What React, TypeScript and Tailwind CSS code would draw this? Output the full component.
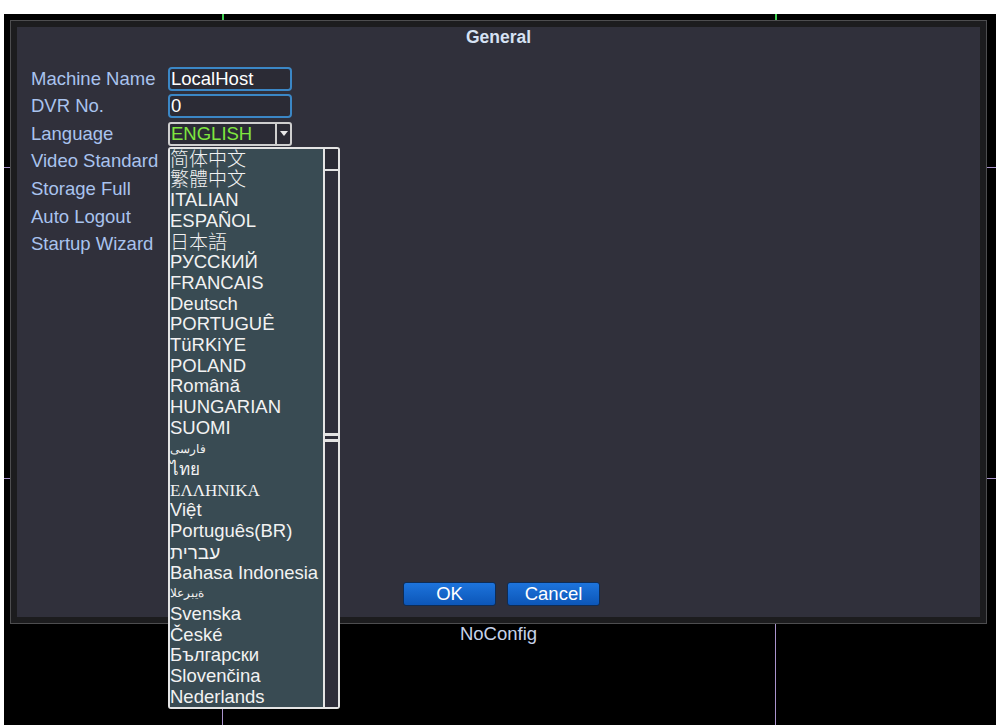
import React from 'react';

const FONT = '"Liberation Sans", Arial, "Noto Sans CJK SC", sans-serif';

const LABELS = ['Machine Name', 'DVR No.', 'Language', 'Video Standard', 'Storage Full', 'Auto Logout', 'Startup Wizard'];

type Lang = { text: string; cls?: string };

const LANGS: Lang[] = [
  { text: '简体中文', cls: 'font-light text-[19px]' },
  { text: '繁體中文', cls: 'font-light text-[19px]' },
  { text: 'ITALIAN' },
  { text: 'ESPAÑOL' },
  { text: '日本語', cls: 'font-light text-[19px]' },
  { text: 'РУССКИЙ' },
  { text: 'FRANCAIS' },
  { text: 'Deutsch' },
  { text: 'PORTUGUÊ' },
  { text: 'TüRKiYE' },
  { text: 'POLAND' },
  { text: 'Română' },
  { text: 'HUNGARIAN' },
  { text: 'SUOMI' },
  { text: 'فارسی', cls: 'text-[12px]' },
  { text: 'ไทย', cls: 'text-[17px] [font-family:"Liberation_Serif",serif]' },
  { text: 'ΕΛΛΗΝΙΚΑ', cls: 'text-[17px] [font-family:"Liberation_Serif",serif]' },
  { text: 'Việt' },
  { text: 'Português(BR)' },
  { text: 'עברית', cls: 'text-[19px]' },
  { text: 'Bahasa Indonesia' },
  { text: 'العربية', cls: 'text-[12px] [unicode-bidi:bidi-override] [direction:ltr]' },
  { text: 'Svenska' },
  { text: 'České' },
  { text: 'Български' },
  { text: 'Slovenčina' },
  { text: 'Nederlands' },
];

function LanguageList() {
  return (
    <div className="absolute left-[-2px] top-[23px] z-20 flex h-[562px] w-[172px] rounded-[3px] border-2 border-[#e4e4e4]">
      <ul className="flex flex-1 flex-col bg-[#394b53]">
        {LANGS.map(l => (
          <li key={l.text} className="flex h-[20.7px] items-center whitespace-nowrap leading-none text-[#f2f2f2]">
            <span className={l.cls ?? 'text-[18.5px]'}>{l.text}</span>
          </li>
        ))}
      </ul>
      <div className="flex w-[15px] flex-col border-l-2 border-[#e4e4e4] bg-[#2e2e3a]">
        <div className="h-[22px] border-b-2 border-[#e4e4e4] bg-[#2a2a34]" />
        <div className="relative flex-1">
          <div className="absolute left-0 right-0 top-[262px] h-[3px] bg-[#e4e4e4]" />
          <div className="absolute left-0 right-0 top-[268px] h-[3px] bg-[#e4e4e4]" />
        </div>
      </div>
    </div>
  );
}

function Field({ idx }: { idx: number }) {
  if (idx === 0 || idx === 1) {
    return (
      <div className="flex h-[24px] w-[124px] items-center rounded-[4px] border-2 border-[#3b87c6] bg-[#2b2b35] pl-[1px] text-[18.5px] leading-none text-white">
        {idx === 0 ? 'LocalHost' : '0'}
      </div>
    );
  }
  if (idx === 2) {
    return (
      <div className="relative flex h-[24px] w-[124px] items-center rounded-[3px] border-2 border-[#cfcfcf] bg-[#2b2b35] text-[18.5px] leading-none">
        <span className="flex-1 pl-[1px] text-[#7fe63f]">ENGLISH</span>
        <span className="flex h-full w-[15px] items-center justify-center border-l-2 border-[#cfcfcf]">
          <svg width="8" height="5" viewBox="0 0 8 5"><path d="M0 0 L8 0 L4 5 Z" fill="#e8e8e8" /></svg>
        </span>
        <LanguageList />
      </div>
    );
  }
  return null;
}

export default function App() {
  return (
    <div className="min-h-[725px] w-[1000px] bg-white pt-[14px]" style={{ fontFamily: FONT }}>
      <div className="relative mx-[4px] h-[711px] bg-black">
        {/* channel split lines behind the dialog */}
        <div className="absolute left-[218px] top-0 h-full w-[1px] bg-[#a993cc]" />
        <div className="absolute left-[218px] top-0 h-[7px] w-[2px] bg-[#3fcf52]" />
        <div className="absolute left-[771px] top-0 h-full w-[1px] bg-[#a993cc]" />
        <div className="absolute left-[771px] top-0 h-[7px] w-[2px] bg-[#3fcf52]" />
        <div className="absolute left-0 top-[153px] h-[1px] w-full bg-[#a993cc]" />
        <div className="absolute left-0 top-[464px] h-[1px] w-full bg-[#a993cc]" />

        <div className="relative ml-[6px] pt-[6px]">
          <div className="h-[604px] w-[977px] border border-[#4d4d4f] bg-[#1c1c1e] p-[6px]">
            <div className="flex h-full flex-col bg-[#30303b]">
              <div className="h-[20px] text-center text-[17.5px] font-bold leading-[20px] text-[#d6e2f4]">General</div>
              <div className="mt-[18px] flex flex-col pl-[14px]">
                {LABELS.map((label, i) => (
                  <div key={label} className="flex h-[27.6px] items-center">
                    <span className="w-[137px] text-[18.5px] leading-none text-[#a9c3ee]">{label}</span>
                    <Field idx={i} />
                  </div>
                ))}
              </div>
              <div className="mt-auto flex justify-center gap-[11px] pb-[11px] pl-[6px]">
                <button className="h-[24px] w-[93px] rounded-[3px] border border-[#0e2c55] bg-gradient-to-b from-[#1d74dc] to-[#0c56b8] text-[18.5px] leading-none text-white">OK</button>
                <button className="h-[24px] w-[93px] rounded-[3px] border border-[#0e2c55] bg-gradient-to-b from-[#1d74dc] to-[#0c56b8] text-[18.5px] leading-none text-white">Cancel</button>
              </div>
            </div>
          </div>
          <div className="w-[977px] pt-[1px] text-center text-[18.5px] leading-[18px] text-[#c6d2e8]">NoConfig</div>
        </div>
      </div>
    </div>
  );
}
